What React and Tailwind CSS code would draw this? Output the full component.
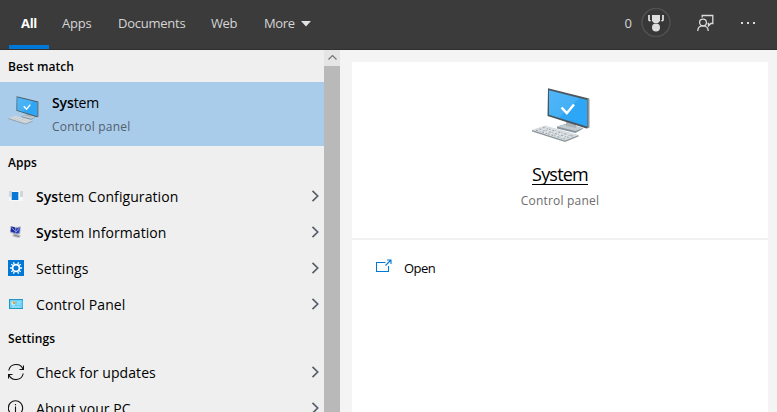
import React from 'react';

function Computer({ className }) {
  return (
    <svg className={className} viewBox="0 0 58 55" fill="none">
      <defs>
        <linearGradient id="screen" x1="0" y1="0" x2="1" y2="1">
          <stop offset="0" stopColor="#4fb6f7" />
          <stop offset="0.5" stopColor="#45b0f6" />
          <stop offset="0.52" stopColor="#2fa5f4" />
          <stop offset="1" stopColor="#2ba7fa" />
        </linearGradient>
      </defs>
      <path d="M25 38.500l10-3 16.500 5-8 4.500-18.500-4.500z" fill="#87949c" />
      <path d="M25 38.500l10-2.500 16.500 4-8 3z" fill="#c3ccd1" />
      <path d="M34 33l10 3v4l-10-2z" fill="#aab4ba" />
      <path d="M16 0.300L57 10.500v29l-2.500 1L15.500 28z" fill="#4b565d" />
      <path d="M55.500 10.500l2 .5v28.500L55.500 40.500z" fill="#8b969d" />
      <path d="M17 2.200L55 12v26.500L17 26.800z" fill="url(#screen)" />
      <path d="M29.500 19.500l5.300 5.700 7.200-8.700" stroke="#fff" strokeWidth="2.500" />
      <path d="M0 42l13-4.500 33.500 9.500-13 5.500z" fill="#d6dbde" />
      <path d="M0 42v1.500l33 10.500 13.500-5.500v-1.500L33 52.500z" fill="#8d989f" />
      <path d="M4 42.200l29 8.800M7.500 41l29 8.500M11 39.500l30 8.700" stroke="#8f9aa1" strokeWidth="0.900" strokeDasharray="2 1.200" />
      <path d="M7 43.500l9-4M12 45l9-4M17.500 46.500l9-4M23 48.500l9-4M28.500 50l9-4" stroke="#edf0f1" strokeWidth="0.800" />
    </svg>
  );
}

function ConfigIcon() {
  return (
    <svg width="16" height="16" viewBox="0 0 16 16">
      <path d="M1 3h14v10H1z" fill="#f7f8f8" />
      <path d="M1 3h3v6H1zM12 3h3v6h-3z" fill="#d3d5d7" />
      <path d="M4 4h6v8H4z" fill="#0878d4" />
      <path d="M3 4h1v8H3zM10 4h1v8h-1z" fill="#a9d0ee" />
    </svg>
  );
}

function InfoComputerIcon() {
  return (
    <svg width="16" height="16" viewBox="0 0 16 16">
      <path d="M2.500 2l5 1 5.500-.5-1 7.500-4 1-6-2.500z" fill="#a9afc6" />
      <path d="M3.500 2.500L7 3.500v5.500L2.500 7.500z" fill="#1c2c9e" />
      <path d="M7.500 4.500L12 3.500l-.8 5.500-3.700.8z" fill="#2f41b8" />
      <path d="M4 4l3.500 3.500M11 4.500L8 8" stroke="#a7b8f5" strokeWidth=".8" />
      <path d="M4 11l4-1.500 5 2-1.500 2.500-6-1z" fill="#bdbec2" />
      <path d="M6 11l5 1.500" stroke="#777b88" />
    </svg>
  );
}

function SettingsIcon() {
  return (
    <svg width="16" height="16" viewBox="0 0 16 16">
      <path d="M0 0h16v16H0z" fill="#0078d7" />
      <circle cx="8" cy="8" r="3.400" fill="none" stroke="#fff" strokeWidth="1.700" />
      <path d="M12 8h2M2 8h2M9.800 4.200l.8-2M6.200 4.200l-.8-2M9.800 11.800l.8 2M6.200 11.800l-.8 2M11 5.500l1.800-1.200M5 5.500L3.200 4.300M11 10.500l1.800 1.200M5 10.500l-1.800 1.200" stroke="#fff" strokeWidth="1.300" />
    </svg>
  );
}

function ControlIcon() {
  return (
    <svg width="16" height="16" viewBox="0 0 16 16">
      <path d="M1 3h14v10H1z" fill="#2794c6" />
      <path d="M2 4h12.500v8H2z" fill="#6bd3fa" />
      <path d="M3 8a2.500 2.500 0 0 0 4 1V5a3 3 0 0 0-4 3z" fill="#b9eafd" />
      <path d="M5 5a2.500 2.500 0 0 1 2 3H5z" fill="#f29a25" />
      <path d="M9 6h4M9 8h3M4 11h8" stroke="#bcebfc" strokeWidth=".8" />
    </svg>
  );
}

function RefreshIcon() {
  return (
    <svg width="16" height="16" viewBox="0 0 16 16" fill="none" stroke="#111" strokeWidth="1.100">
      <path d="M.8 6.500A7.400 7.400 0 0 1 15 5.300M15.200 9.500A7.400 7.400 0 0 1 1 10.700M15.500 1.500v4h-4M.5 14.500v-4h4" />
    </svg>
  );
}

function AboutIcon() {
  return (
    <svg width="16" height="16" viewBox="0 0 16 16" fill="none" stroke="#111" strokeWidth="1.100">
      <circle cx="7.500" cy="8" r="7.200" />
      <path d="M7.500 6.500V12M7.500 4v1.200" />
    </svg>
  );
}

function Result({ icon, children }) {
  return (
    <div className="flex h-9 shrink-0 items-center pl-2 pr-1">
      {icon}
      <span className="ml-3 flex-1">{children}</span>
      <svg width="9" height="12" viewBox="0 0 9 12" fill="none">
        <path d="M1.500 .8L6.700 6l-5.200 5.200" stroke="#56606b" strokeWidth="1.700" />
      </svg>
    </div>
  );
}

export default function App() {
  return (
    <div className="flex h-[412px] w-[777px] flex-col overflow-hidden bg-[#f4f4f4] font-['Open_Sans','Noto_Sans',sans-serif] text-black">
      <header className="flex h-[50px] shrink-0 border-b border-[#303030] bg-[#3b3b3b] text-[13px] leading-[47px] text-[#d5d5d5]">
        <nav className="flex">
          <div className="ml-[9px] w-10 border-b-4 border-[#0078d7] text-center font-bold tracking-[-0.3px] text-white">All</div>
          <span className="ml-[13px] w-[56px] tracking-[-0.2px]">Apps</span>
          <span className="w-[93px] tracking-[-0.25px]">Documents</span>
          <span className="w-[53px] tracking-[-0.4px]">Web</span>
          <span className="w-[37px] tracking-[-0.4px]">More</span>
          <svg className="mt-[21px]" width="10" height="6" viewBox="0 0 10 6"><path d="M0 0h10L5 5.500z" fill="#e2e2e2" /></svg>
        </nav>
        <div className="ml-auto flex">
          <span className="mr-[9px]">0</span>
          <svg className="mt-[7px]" width="30" height="30" viewBox="0 0 30 30" fill="none">
            <circle cx="15" cy="15.500" r="14" fill="#383838" stroke="#505050" strokeWidth="1.500" />
            <path d="M11 8h8v6l-2 2h-4l-2-2z" fill="#ddd" />
            <path d="M8 8v5l1.500 1M22 8v5l-1.500 1" stroke="#ddd" strokeWidth="1.800" />
            <circle cx="15" cy="20.500" r="4" fill="#ddd" />
          </svg>
          <svg className="ml-[26px] mt-[14px]" width="17" height="18" viewBox="0 0 17 18" fill="none" stroke="#dcdcdc" strokeWidth="1.300">
            <path d="M5.200 3.500V1.500h10.600v8h-2l-2.300 2.400V9.500h-1" />
            <circle cx="6" cy="8.500" r="3.400" />
            <path d="M.8 17c0-3 2.100-5.100 5.200-5.100s5.200 2.100 5.200 5.100" />
          </svg>
          <svg className="ml-[27px] mr-[21px] mt-[22px]" width="15" height="3"><path d="M0 0h2v2H0zM6 0h2v2H6zM12 0h2v2h-2z" fill="#dcdcdc" /></svg>
        </div>
      </header>
      <main className="flex min-h-0 flex-1">
        <section className="flex w-[324px] shrink-0 flex-col overflow-hidden bg-[#efefef] text-[14px] tracking-[0.08px]">
          <h2 className="h-8 shrink-0 pl-2 text-[12px] font-semibold leading-[34px]">Best match</h2>
          <div className="flex h-16 shrink-0 bg-[#aacceb]">
            <Computer className="ml-2 mt-[14px] h-[29px] w-[31px]" />
            <div className="ml-[13px] pt-[11px]">
              <div className="h-5 leading-5 tracking-[-0.1px]"><span className="font-semibold">Sys</span>tem</div>
              <div className="mt-[5px] text-[12px] leading-[18px] tracking-[0.2px] text-[#53606d]">Control panel</div>
            </div>
          </div>
          <h2 className="h-8 shrink-0 pl-2 text-[12px] font-semibold leading-[34px]">Apps</h2>
          <Result icon={<ConfigIcon />}><b className="font-semibold">Sys</b>tem Configuration</Result>
          <Result icon={<InfoComputerIcon />}><b className="font-semibold">Sys</b>tem Information</Result>
          <Result icon={<SettingsIcon />}>Settings</Result>
          <Result icon={<ControlIcon />}>Control Panel</Result>
          <h2 className="h-8 shrink-0 pl-2 text-[12px] font-semibold leading-[34px]">Settings</h2>
          <Result icon={<RefreshIcon />}>Check for updates</Result>
          <Result icon={<AboutIcon />}>About your PC</Result>
        </section>
        <div className="w-4 shrink-0 bg-[#b9b9b9]">
          <div className="flex h-4 items-center justify-center bg-[#e5e5e5]">
            <svg width="9" height="6" viewBox="0 0 9 6"><path d="M.5 4.500l4-4 4 4" fill="none" stroke="#777" strokeWidth="1.200" /></svg>
          </div>
        </div>
        <section className="ml-3 mt-3 w-[416px] bg-white">
          <div className="flex h-[178px] flex-col items-center border-b-2 border-[#f1f1f1]">
            <Computer className="ml-[2px] mt-[26px] h-[55px] w-[58px]" />
            <div className="mt-[21px] border-b border-black text-[18px] leading-[20px] tracking-[-0.8px]">System</div>
            <div className="mt-[7px] text-[12px] leading-[18px] tracking-[0.2px] text-[#6c6c6c]">Control panel</div>
          </div>
          <div className="flex h-[57px] items-center pl-6 text-[13px] tracking-[-0.5px]">
            <svg className="-mt-[5px]" width="16" height="14" viewBox="0 0 16 14" fill="none" stroke="#0078d7" strokeWidth="1.100">
              <path d="M9.500 3.500h-9v9h12V7M9.500 6.500l5-5M11 1h4v4" />
            </svg>
            <span className="ml-3">Open</span>
          </div>
        </section>
      </main>
    </div>
  );
}
